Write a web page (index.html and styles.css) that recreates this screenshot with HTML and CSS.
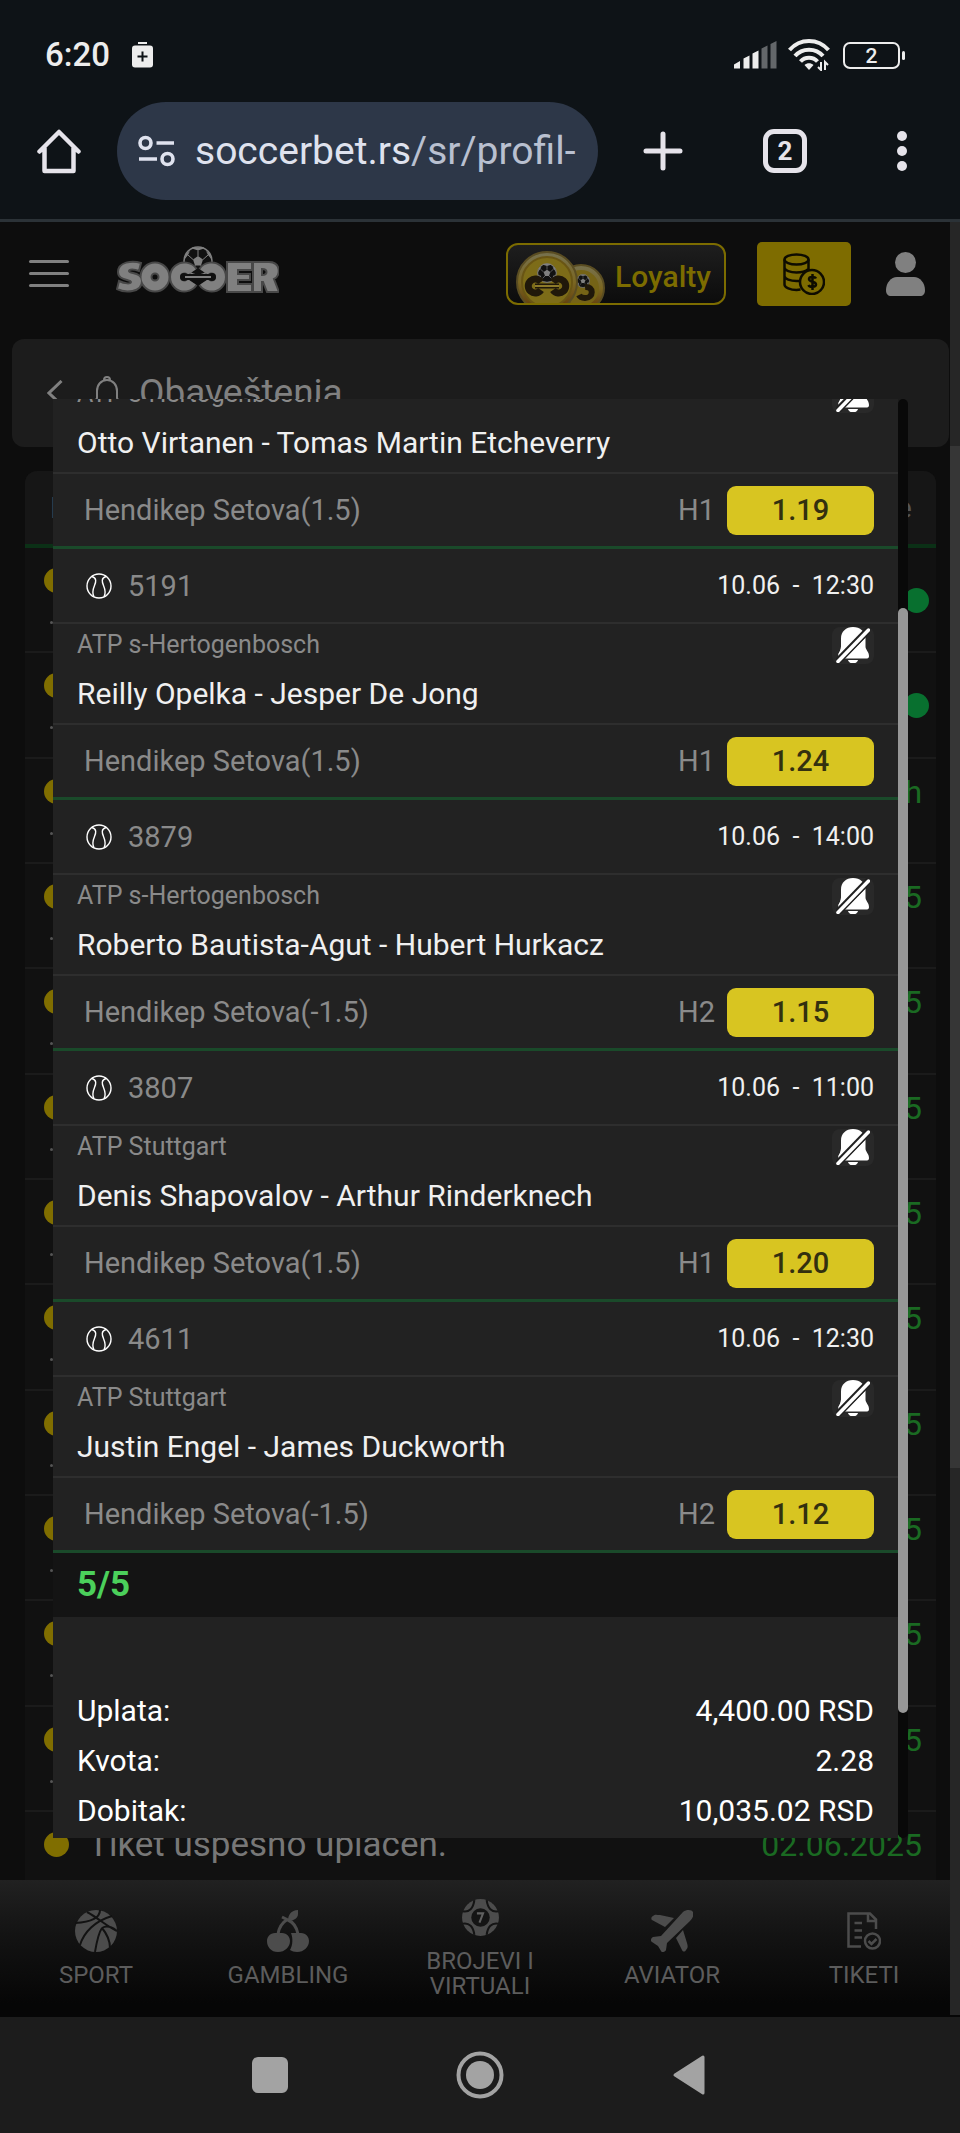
FILE: index.html
```html
<!DOCTYPE html>
<html lang="sr">
<head>
    <meta charset="UTF-8">
    <meta name="viewport" content="width=device-width, initial-scale=1">
    <title>Obaveštenja</title>
    <link rel="stylesheet" href="styles.css">
</head>
<body>
    <!-- shared icons -->
    <svg class="sprite" width="0" height="0">
        <symbol id="tennis" viewBox="0 0 26 26">
            <g fill="none" stroke="#fff" stroke-width="1.4">
                <circle cx="13" cy="13" r="12"/>
                <path d="M6 3.500C11 5 10 9 8.500 12.500S6 20 8 24M20 3.500C15 5 16 9 17.500 12.500S20 20 18 24"/>
            </g>
        </symbol>
        <symbol id="bell-off" viewBox="0 0 34 36">
            <path fill="#fff" d="M17 0c7 0 12.500 4.500 12.500 11.500v8c0 3.500 3.500 5 3.500 9.500 0 1.500-.6 2.500-2 2.500H6C3.500 31.500 1.500 29 2.500 26.500 4 24 5 22.500 5 19.500v-8C5 4.500 10 0 17 0z"/>
            <path fill="#fff" d="M12 33h10c-.6 2-2.500 3.500-5 3.500S12.600 35 12 33z"/>
            <path stroke="#222" stroke-width="7" d="M0 36L35 0"/>
            <path fill="#fff" d="M2.500 27C4 24.500 5 22.500 5 19.500V17l4 4z"/>
            <path stroke="#222" stroke-width="6" d="M3 33.500L32 3.500"/>
            <path stroke="#fff" stroke-width="3.500" stroke-linecap="round" d="M2 34.500L32.500 3"/>
        </symbol>
        <symbol id="ball" viewBox="0 0 30 30">
            <circle cx="15" cy="15" r="14" fill="#111" stroke="#808080" stroke-width="1.500"/>
            <path fill="#808080" d="M15 10l5 3.500-2 6h-6l-2-6zM9 2.500l6 2 6-2v-1H9zM1 14l4-5 2-4-4 3zM29 14l-4-5-2-4 4 3zM1.500 18l4 1 2 7zM28.500 18l-4 1-2 7z"/>
            <path fill="none" stroke="#808080" d="M15 4.500V10M5 9l5 4.500M25 9l-5 4.500M12 19.500l-4 4M18 19.500l4 4"/>
        </symbol>
    </svg>

    <header class="phone-top">
        <div class="status">
            <span class="clock">6:20</span>
            <svg width="21" height="26" viewBox="0 0 21 26">
                <path fill="#ededed" d="M6 0h9v2H6z"/>
                <rect y="3.500" width="21" height="22" rx="3" fill="#ededed"/>
                <path stroke="#0e1317" stroke-width="2" d="M10.500 9.500v10M5.500 14.500h10"/>
            </svg>
            <div class="status-right">
                <svg width="43" height="28" viewBox="0 0 43 28">
                    <path fill="#ededed" d="M0 27.500v-4l6-3.500v7.500zM9.500 27.500V17.500l6-3v13zM18.500 27.500V12.500l6-3v18z"/>
                    <path fill="#63676a" d="M27.500 27.500V7.500l6-3v23zM36.500 27.500V3l6-3v27.500z"/>
                </svg>
                <svg width="42" height="32" viewBox="0 0 42 32">
                    <g fill="none" stroke="#ededed" stroke-width="4">
                        <path d="M1.500 11C12-1 30-1 40.500 11M7 17c7-8.500 21-8.500 28 0M12.500 22.500c4.500-5 12.500-5 17 0"/>
                    </g>
                    <path fill="#ededed" d="M21 31l-4.500-5c2.500-2.500 6.500-2.500 9 0z"/>
                    <path fill="none" stroke="#ededed" stroke-width="2" d="M33 23v8l-3-3M37 31v-8l3 3"/>
                </svg>
                <div class="battery">2</div>
            </div>
        </div>
        <div class="toolbar">
            <button class="tool" aria-label="Home">
                <svg width="44" height="46" viewBox="0 0 44 46">
                    <path fill="none" stroke="#e5e3ea" stroke-width="4.500" stroke-linejoin="round" stroke-linecap="round" d="M2.500 23.500L22 4l19.500 19.500M7.500 20v23h29V20"/>
                </svg>
            </button>
            <div class="address">
                <svg width="37" height="32" viewBox="0 0 37 32">
                    <g fill="none" stroke="#dfe2ee" stroke-width="3.600">
                        <circle cx="7.500" cy="8" r="5.500"/>
                        <circle cx="29.500" cy="24" r="5.500"/>
                        <path d="M18.500 8H36M1 24h18"/>
                    </g>
                </svg>
                <span class="url">soccerbet.rs<span class="path">/sr/profil-</span></span>
            </div>
            <button class="tool plus" aria-label="New tab">
                <svg width="40" height="40" viewBox="0 0 40 40">
                    <path stroke="#e5e3ea" stroke-width="5" stroke-linecap="round" d="M20 3v34M3 20h34"/>
                </svg>
            </button>
            <button class="tool tabs">2</button>
            <button class="tool dots" aria-label="Menu">
                <svg width="10" height="40" viewBox="0 0 10 40">
                    <g fill="#e5e3ea"><circle cx="5" cy="5" r="5"/><circle cx="5" cy="20" r="5"/><circle cx="5" cy="35" r="5"/></g>
                </svg>
            </button>
        </div>
    </header>

    <main class="page">
        <div class="site-header">
            <button class="burger" aria-label="Meni"><i></i><i></i><i></i></button>
            <a class="logo" href="#" aria-label="Soccer">
                <svg width="163" height="47" viewBox="0 0 163 47">
                    <use href="#ball" x="67" y="0" width="30" height="30"/>
                    <g fill="none" stroke="#484848" stroke-width="13">
                        <circle cx="39" cy="31" r="9"/>
                        <path d="M76 26a9 9 0 1 0 0 10M88 26a9 9 0 1 1 0 10"/>
                    </g>
                    <g fill="#808080" stroke="#484848" stroke-width="2">
                        <path d="M25 17l-2 8c-5-2-10-2-10 0 0 3 13 1 13 10 0 12-17 12-25 8l2-8c6 3 12 3 12 1 0-3-13-1-13-10 0-10 14-12 23-9z"/>
                        <path d="M111 16h25v8h-14v4h12v6h-12v4h14v8h-25zM137 16h16c12 0 12 14 5 17l5 13h-12l-4-10h-1v10h-9zm9 7v6c6 0 6-6 0-6z"/>
                    </g>
                    <g fill="none" stroke="#808080" stroke-width="9">
                        <circle cx="39" cy="31" r="9"/>
                        <path d="M76 26a9 9 0 1 0 0 10M88 26a9 9 0 1 1 0 10"/>
                    </g>
                    <circle cx="68" cy="31" r="4" fill="#111"/>
                    <circle cx="96" cy="31" r="4" fill="#111"/>
                    <path stroke="#111" stroke-width="6" d="M68 31h28"/>
                    <path stroke="#808080" stroke-width="2" d="M69 31h26"/>
                </svg>
            </a>
            <button class="loyalty">
                <svg width="90" height="52" viewBox="0 0 90 52">
                    <defs>
                        <linearGradient id="gold" x1="0" y1="0" x2="0" y2="1">
                            <stop offset="0" stop-color="#76714f"/>
                            <stop offset=".5" stop-color="#7b6722"/>
                            <stop offset="1" stop-color="#5c3509"/>
                        </linearGradient>
                    </defs>
                    <circle cx="65" cy="37" r="23" fill="url(#gold)" stroke="#5a4d22" stroke-width="2"/>
                    <circle cx="65" cy="37" r="18" fill="#756316"/>
                    <use href="#ball" x="60" y="23" width="14" height="14"/>
                    <path fill="none" stroke="#20180a" stroke-width="6" d="M69 36c9-1 9 11 0 11-3 0-5-1-6-3"/>
                    <circle cx="31" cy="31" r="30" fill="url(#gold)" stroke="#5a4d22" stroke-width="2"/>
                    <circle cx="31" cy="31" r="25" fill="#7d6c18" stroke="#695514" stroke-width="2"/>
                    <use href="#ball" x="21" y="12" width="20" height="20"/>
                    <path fill="none" stroke="#20180a" stroke-width="7" d="M25 31a7 7 0 1 0 0 8M37 31a7 7 0 1 1 0 8"/>
                    <path stroke="#20180a" stroke-width="5" d="M19 35h24"/>
                    <path stroke="#8d7a2a" stroke-width="2" d="M19 35h24"/>
                </svg>
                Loyalty
            </button>
            <button class="money" aria-label="Uplata">
                <svg width="42" height="42" viewBox="0 0 42 42">
                    <g fill="none" stroke="#0e0c00" stroke-width="2.500">
                        <ellipse cx="13.500" cy="6.500" rx="12" ry="5"/>
                        <path d="M1.500 6.500v25c0 3 6 5.500 12 5.500l4-.5M25.500 6.500V16M1.500 14.500c0 3 6 5 12 5s9-1 12-3.500M1.500 23c0 3 6 5 12 5h3"/>
                        <circle cx="29" cy="29" r="12"/>
                        <path d="M33 25.500c-1-2-7-2.500-7 .5 0 3.500 7 2 7 5.500 0 3-6.500 3-7.500.5M29.500 21v16"/>
                    </g>
                </svg>
            </button>
            <a class="user" href="#" aria-label="Profil">
                <svg width="39" height="44" viewBox="0 0 39 44">
                    <g fill="#808080"><circle cx="19.500" cy="10.500" r="10.500"/><path d="M11 25h17c6 0 11 6 11 13 0 4-2 6-5 6H5c-3 0-5-2-5-6 0-7 5-13 11-13z"/></g>
                </svg>
            </a>
        </div>

        <div class="title-bar">
            <a class="back" href="#" aria-label="Nazad">
                <svg width="16" height="26" viewBox="0 0 16 26"><path fill="none" stroke="#808080" stroke-width="3" d="M14.500 1L2 13l12.500 12"/></svg>
            </a>
            <svg width="30" height="36" viewBox="0 0 30 36">
                <path fill="none" stroke="#808080" stroke-width="2" d="M12 5a3 3 0 1 1 6 0M15 5c6 0 10 5 10 11v7l3 6H2l3-6v-7C5 10 9 5 15 5zM11 30a4 4 0 0 0 8 0"/>
            </svg>
            <h1>Obaveštenja</h1>
        </div>

        <div class="notifications">
            <div class="list-head"><span>Naslov</span><span>Vreme</span></div>
            <div class="note"><p>Tiket je dobitan.</p><b class="new"></b></div>
            <div class="note"><p>Tiket je dobitan.</p><b class="new"></b></div>
            <div class="note"><p>Tiket je dobitan.</p><time>23h</time></div>
            <div class="note"><p>Tiket uspešno uplaćen.</p><time>09.06.2025</time></div>
            <div class="note"><p>Tiket uspešno uplaćen.</p><time>09.06.2025</time></div>
            <div class="note"><p>Tiket uspešno uplaćen.</p><time>08.06.2025</time></div>
            <div class="note"><p>Tiket uspešno uplaćen.</p><time>08.06.2025</time></div>
            <div class="note"><p>Tiket uspešno uplaćen.</p><time>06.06.2025</time></div>
            <div class="note"><p>Tiket uspešno uplaćen.</p><time>06.06.2025</time></div>
            <div class="note"><p>Tiket uspešno uplaćen.</p><time>05.06.2025</time></div>
            <div class="note"><p>Tiket uspešno uplaćen.</p><time>04.06.2025</time></div>
            <div class="note"><p>Tiket uspešno uplaćen.</p><time>03.06.2025</time></div>
            <div class="note"><p>Tiket uspešno uplaćen.</p><time>02.06.2025</time></div>
        </div>

        <nav class="bottom-nav">
            <a href="#">
                <svg width="42" height="42" viewBox="0 0 42 42">
                    <circle cx="21" cy="21" r="21" fill="#4c4c4c"/>
                    <path fill="none" stroke="#121212" stroke-width="2" d="M12 2c11 6 21 15 30 19M25 0c0 7-8 12-25 13M5 35C9 22 20 11 37 6M20 42c2-12 4-20 7-24M27 18c5 6 8 12 8 20M27 18c5-3 10-1 15 3"/>
                </svg>
                <span>SPORT</span>
            </a>
            <a href="#">
                <svg width="42" height="42" viewBox="0 0 42 42">
                    <path fill="#4c4c4c" d="M8 23h7c5 0 8 4 8 8 0 6-5 11-12 11S0 37 0 31c0-4 3-8 8-8zM24 23h10c5 0 8 4 8 8 0 6-5 11-12 11-3 0-5-1-7-2 3-5 3-12 1-17zM31 0v4c0 4-4 7-10 7 0-6 3-11 10-11z"/>
                    <path fill="none" stroke="#4c4c4c" stroke-width="3" d="M15 7l6 3c7 3 9 9 10 14M21 9c-5 3-9 8-10 15"/>
                </svg>
                <span>GAMBLING</span>
            </a>
            <a href="#">
                <svg width="37" height="40" viewBox="0 0 36 39">
                    <circle cx="18" cy="19" r="18" fill="#4c4c4c"/>
                    <g fill="none" stroke="#141414" stroke-width="2">
                        <path d="M1 13c6 1 10-3 11-11M35 13c-6 1-10-3-11-11M1 25c6-1 10 3 11 11M35 25c-6-1-10 3-11 11"/>
                    </g>
                    <circle cx="18" cy="19" r="9" fill="#141414"/>
                    <path fill="none" stroke="#606060" stroke-width="2" d="M14.500 15h6l-3.500 9"/>
                </svg>
                <span>BROJEVI I VIRTUALI</span>
            </a>
            <a href="#">
                <svg width="42" height="42" viewBox="0 0 42 42">
                    <path fill="#4c4c4c" d="M32 2c4-3 9-2 10 0 1 3 0 6-3 9L16 33l-1 7c-1 2-4 3-5 1l-3-5-6-4c-2-1-1-4 1-5l8-1zM2 6c2-2 4-1 7-1l14 3-9 9L1 10C0 9 0 7 2 6zM25 28l7-8 4 13c1 3 1 5-1 7-1 2-3 2-4 0z"/>
                </svg>
                <span>AVIATOR</span>
            </a>
            <a href="#">
                <svg width="34" height="42" viewBox="0 0 34 42">
                    <g fill="none" stroke="#4c4c4c" stroke-width="2.500">
                        <path d="M14 36.500H1.500V3.500H23l6 6V19M21 4v7h8M7.500 13H15M7.500 20.500H15M7.500 27.500H15"/>
                        <circle cx="25.500" cy="31" r="7.500"/>
                        <path d="M21.500 31l3 3 5-5"/>
                    </g>
                </svg>
                <span>TIKETI</span>
            </a>
        </nav>

        <div class="page-scroll"><i></i></div>

        <section class="modal">
            <div class="ticket">
                <article class="leg">
                    <div class="leg-head"><svg width="26" height="26"><use href="#tennis"/></svg><span>5240</span><time>10.06&nbsp; - &nbsp;11:00</time></div>
                    <div class="match"><small>ATP s-Hertogenbosch</small><strong>Otto Virtanen - Tomas Martin Etcheverry</strong><button class="mute" aria-label="Obaveštenja"><svg width="34" height="36"><use href="#bell-off"/></svg></button></div>
                    <div class="bet"><span>Hendikep Setova(1.5)</span><em>H1</em><b>1.19</b></div>
                </article>
                <article class="leg">
                    <div class="leg-head"><svg width="26" height="26"><use href="#tennis"/></svg><span>5191</span><time>10.06&nbsp; - &nbsp;12:30</time></div>
                    <div class="match"><small>ATP s-Hertogenbosch</small><strong>Reilly Opelka - Jesper De Jong</strong><button class="mute" aria-label="Obaveštenja"><svg width="34" height="36"><use href="#bell-off"/></svg></button></div>
                    <div class="bet"><span>Hendikep Setova(1.5)</span><em>H1</em><b>1.24</b></div>
                </article>
                <article class="leg">
                    <div class="leg-head"><svg width="26" height="26"><use href="#tennis"/></svg><span>3879</span><time>10.06&nbsp; - &nbsp;14:00</time></div>
                    <div class="match"><small>ATP s-Hertogenbosch</small><strong>Roberto Bautista-Agut - Hubert Hurkacz</strong><button class="mute" aria-label="Obaveštenja"><svg width="34" height="36"><use href="#bell-off"/></svg></button></div>
                    <div class="bet"><span>Hendikep Setova(-1.5)</span><em>H2</em><b>1.15</b></div>
                </article>
                <article class="leg">
                    <div class="leg-head"><svg width="26" height="26"><use href="#tennis"/></svg><span>3807</span><time>10.06&nbsp; - &nbsp;11:00</time></div>
                    <div class="match"><small>ATP Stuttgart</small><strong>Denis Shapovalov - Arthur Rinderknech</strong><button class="mute" aria-label="Obaveštenja"><svg width="34" height="36"><use href="#bell-off"/></svg></button></div>
                    <div class="bet"><span>Hendikep Setova(1.5)</span><em>H1</em><b>1.20</b></div>
                </article>
                <article class="leg">
                    <div class="leg-head"><svg width="26" height="26"><use href="#tennis"/></svg><span>4611</span><time>10.06&nbsp; - &nbsp;12:30</time></div>
                    <div class="match"><small>ATP Stuttgart</small><strong>Justin Engel - James Duckworth</strong><button class="mute" aria-label="Obaveštenja"><svg width="34" height="36"><use href="#bell-off"/></svg></button></div>
                    <div class="bet"><span>Hendikep Setova(-1.5)</span><em>H2</em><b>1.12</b></div>
                </article>
                <div class="hits">5/5</div>
                <dl class="totals">
                    <dt>Uplata:</dt><dd>4,400.00 RSD</dd>
                    <dt>Kvota:</dt><dd>2.28</dd>
                    <dt>Dobitak:</dt><dd>10,035.02 RSD</dd>
                </dl>
            </div>
            <div class="modal-scroll"><i></i></div>
        </section>
    </main>

    <footer class="android-nav">
        <button aria-label="Recent"><svg width="36" height="36"><rect width="36" height="36" rx="6" fill="#a3a3a3"/></svg></button>
        <button aria-label="Home"><svg width="48" height="48"><circle cx="24" cy="24" r="21.500" fill="none" stroke="#a3a3a3" stroke-width="4"/><circle cx="24" cy="24" r="14" fill="#a3a3a3"/></svg></button>
        <button aria-label="Back"><svg width="34" height="42"><path d="M3 21L31 3v36z" fill="#a3a3a3" stroke="#a3a3a3" stroke-width="3" stroke-linejoin="round"/></svg></button>
    </footer>
</body>
</html>
```

FILE: styles.css
```css
* {
    box-sizing: border-box;
}

body {
    margin: 0;
    height: 100vh;
    display: flex;
    flex-direction: column;
    font-family: Roboto, "Noto Sans", sans-serif;
    background: #0d0d0d;
    color: #808080;
}

button {
    background: none;
    border: none;
    padding: 0;
    font-family: inherit;
    color: inherit;
}

a {
    color: inherit;
    text-decoration: none;
}

svg {
    display: block;
    flex: none;
}

.sprite {
    position: absolute;
}

/* phone status bar and browser toolbar */
.phone-top {
    background: #0e1317;
    border-bottom: 3px solid #2b3237;
    padding: 34px 53px 19px 37px;
    flex: none;
}

.status {
    display: flex;
    align-items: center;
    height: 42px;
    padding: 0 0 0 8px;
    gap: 22px;
    color: #ededed;
}

.clock {
    font-size: 33px;
    font-weight: 500;
    line-height: 42px;
}

.status-right {
    margin-left: auto;
    display: flex;
    align-items: center;
    gap: 11px;
}

.battery {
    position: relative;
    width: 57px;
    height: 27px;
    margin: 0 7px 0 2px;
    border: 2px solid #ededed;
    border-radius: 7px;
    font-size: 21px;
    font-weight: 500;
    line-height: 25px;
    text-align: center;
}

.battery::after {
    content: "";
    position: absolute;
    right: -7px;
    top: 7px;
    width: 3px;
    height: 9px;
    border-radius: 2px;
    background: #ededed;
}

.toolbar {
    display: flex;
    align-items: center;
    margin-top: 26px;
}

.address {
    flex: 1;
    display: flex;
    align-items: center;
    gap: 20px;
    height: 98px;
    margin: 0 45px 0 36px;
    padding-left: 21px;
    border-radius: 49px;
    background: #2d3748;
    overflow: hidden;
}

.url {
    font-size: 39px;
    line-height: 48px;
    color: #dfe2ee;
    white-space: nowrap;
}

.path {
    color: #b9c0d0;
}

.tabs {
    width: 44px;
    height: 44px;
    margin: 0 90px 0 80px;
    border: 5px solid #e5e3ea;
    border-radius: 11px;
    font-size: 26px;
    font-weight: 700;
    line-height: 34px;
    color: #e5e3ea;
}

/* site */
.page {
    position: relative;
    flex: 1;
    min-height: 0;
    display: flex;
    flex-direction: column;
    overflow: hidden;
}

.site-header {
    display: flex;
    align-items: center;
    height: 103px;
    padding: 0 35px 0 29px;
    flex: none;
}

.burger {
    width: 40px;
    display: grid;
    gap: 9px;
}

.burger i {
    height: 3px;
    border-radius: 2px;
    background: #808080;
}

.logo {
    margin: 0 auto 8px 47px;
}

.loyalty {
    display: flex;
    align-items: flex-end;
    height: 62px;
    width: 220px;
    padding-left: 8px;
    gap: 9px;
    border: 2px solid #7c6c00;
    border-radius: 12px;
    background: linear-gradient(#1e1e1e, #0c0c0c);
    font-size: 30px;
    font-weight: 500;
    line-height: 52px;
    color: #7c6c00;
}

.money {
    display: flex;
    align-items: center;
    justify-content: center;
    width: 94px;
    height: 64px;
    margin: 0 35px 0 31px;
    border-radius: 5px;
    background: #7e6c00;
}

.title-bar {
    display: flex;
    align-items: center;
    gap: 17px;
    height: 108px;
    margin: 14px 11px 24px 12px;
    padding: 0 35px;
    border-radius: 12px;
    background: #1c1c1c;
    flex: none;
}

.title-bar > svg {
    margin-left: 12px;
}

.title-bar h1 {
    margin: 0;
    font-size: 37px;
    font-weight: 400;
    line-height: 44px;
}

.notifications {
    flex: 1;
    min-height: 0;
    overflow: hidden;
    margin: 0 24px 0 25px;
    border-radius: 12px 12px 0 0;
    background: #111;
}

.list-head {
    display: flex;
    justify-content: space-between;
    height: 77px;
    padding: 0 24px 0 25px;
    border-bottom: 4px solid #0b3016;
    background: #161616;
    font-size: 30px;
    line-height: 74px;
    color: #555;
}

.note {
    position: relative;
    display: flex;
    justify-content: space-between;
    height: 105px;
    padding: 20px 7px 0 19px;
    border-bottom: 2px solid #1b1b1b;
}

/* unread marker */
.note::before {
    content: "";
    width: 25px;
    height: 25px;
    border-radius: 50%;
    background: #806e00;
}

.note::after {
    content: "";
    position: absolute;
    left: 25px;
    top: 73px;
    width: 3px;
    height: 3px;
    border-radius: 50%;
    background: #555;
}

.note:nth-child(3n) {
    height: 106px;
}

.note p {
    flex: 1;
    margin: 0 0 0 19px;
    font-size: 35px;
    line-height: 26px;
    color: #777;
}

.note time {
    margin-right: 7px;
    font-size: 32px;
    line-height: 26px;
    color: #1a6a22;
}

.note .new {
    width: 25px;
    height: 25px;
    margin-top: 20px;
    border-radius: 50%;
    background: #08702f;
}

.bottom-nav {
    display: grid;
    grid-template-columns: repeat(5, 1fr);
    height: 137px;
    flex: none;
    background: linear-gradient(#212121, #131313 40%, #060606 90%);
}

.bottom-nav a {
    display: flex;
    flex-direction: column;
    align-items: center;
    justify-content: center;
    gap: 11px;
    padding: 0 30px;
    font-size: 24px;
    line-height: 25px;
    text-align: center;
    color: #5c5c5c;
}

.page-scroll {
    position: absolute;
    top: 0;
    right: 0;
    bottom: 2px;
    width: 10px;
    background: #262626;
}

.page-scroll i {
    position: absolute;
    top: 12.5%;
    width: 100%;
    height: 57%;
    background: #363636;
}

/* ticket modal */
.modal {
    position: absolute;
    inset: 177px 52px 179px 53px;
    display: flex;
    overflow: hidden;
}

.ticket {
    flex: 1;
    margin-top: -101px;
    background: #222;
}

.leg {
    border-bottom: 3px solid #1a4a2a;
}

.leg-head {
    display: flex;
    align-items: center;
    height: 75px;
    padding: 0 24px 0 33px;
    gap: 16px;
    border-bottom: 2px solid #2e2e2e;
    font-size: 29px;
    color: #8a8a8a;
}

.leg-head time {
    margin-left: auto;
    font-size: 25px;
    color: #f0f0f0;
}

.match {
    position: relative;
    height: 101px;
    padding: 5px 24px 0;
    border-bottom: 2px solid #2e2e2e;
}

.match small {
    display: block;
    font-size: 25px;
    line-height: 32px;
    color: #8a8a8a;
}

.match strong {
    display: block;
    margin-top: 16px;
    font-size: 30px;
    font-weight: 400;
    line-height: 34px;
    color: #f0f0f0;
}

.mute {
    position: absolute;
    top: 3px;
    right: 24px;
    display: flex;
    justify-content: center;
    width: 42px;
    height: 37px;
    border-radius: 8px;
    background: #292929;
}

.bet {
    display: flex;
    align-items: center;
    height: 72px;
    padding: 0 24px 0 31px;
    font-size: 29px;
    color: #8a8a8a;
}

.bet em {
    width: 49px;
    margin-left: auto;
    font-style: normal;
}

.bet b {
    width: 147px;
    height: 49px;
    border-radius: 9px;
    background: #d8c521;
    font-weight: 500;
    line-height: 49px;
    text-align: center;
    color: #33300f;
}

.hits {
    height: 64px;
    padding-left: 24px;
    background: #141414;
    font-size: 35px;
    font-weight: 700;
    line-height: 64px;
    color: #4bd05b;
}

.totals {
    display: grid;
    grid-template-columns: 1fr auto;
    margin: 0;
    padding: 69px 24px 0;
    font-size: 30px;
    line-height: 50px;
    color: #fff;
}

.totals dd {
    margin: 0;
    text-align: right;
}

.modal-scroll {
    position: relative;
    width: 10px;
    border-radius: 5px;
    background: #090909;
}

.modal-scroll i {
    position: absolute;
    top: 14.5%;
    width: 100%;
    height: 76.8%;
    border-radius: 5px;
    background: #979797;
}

/* android navigation */
.android-nav {
    display: flex;
    align-items: center;
    justify-content: center;
    gap: 168px;
    height: 116px;
    padding-right: 3px;
    flex: none;
    background: #1c1c1c;
}
```
